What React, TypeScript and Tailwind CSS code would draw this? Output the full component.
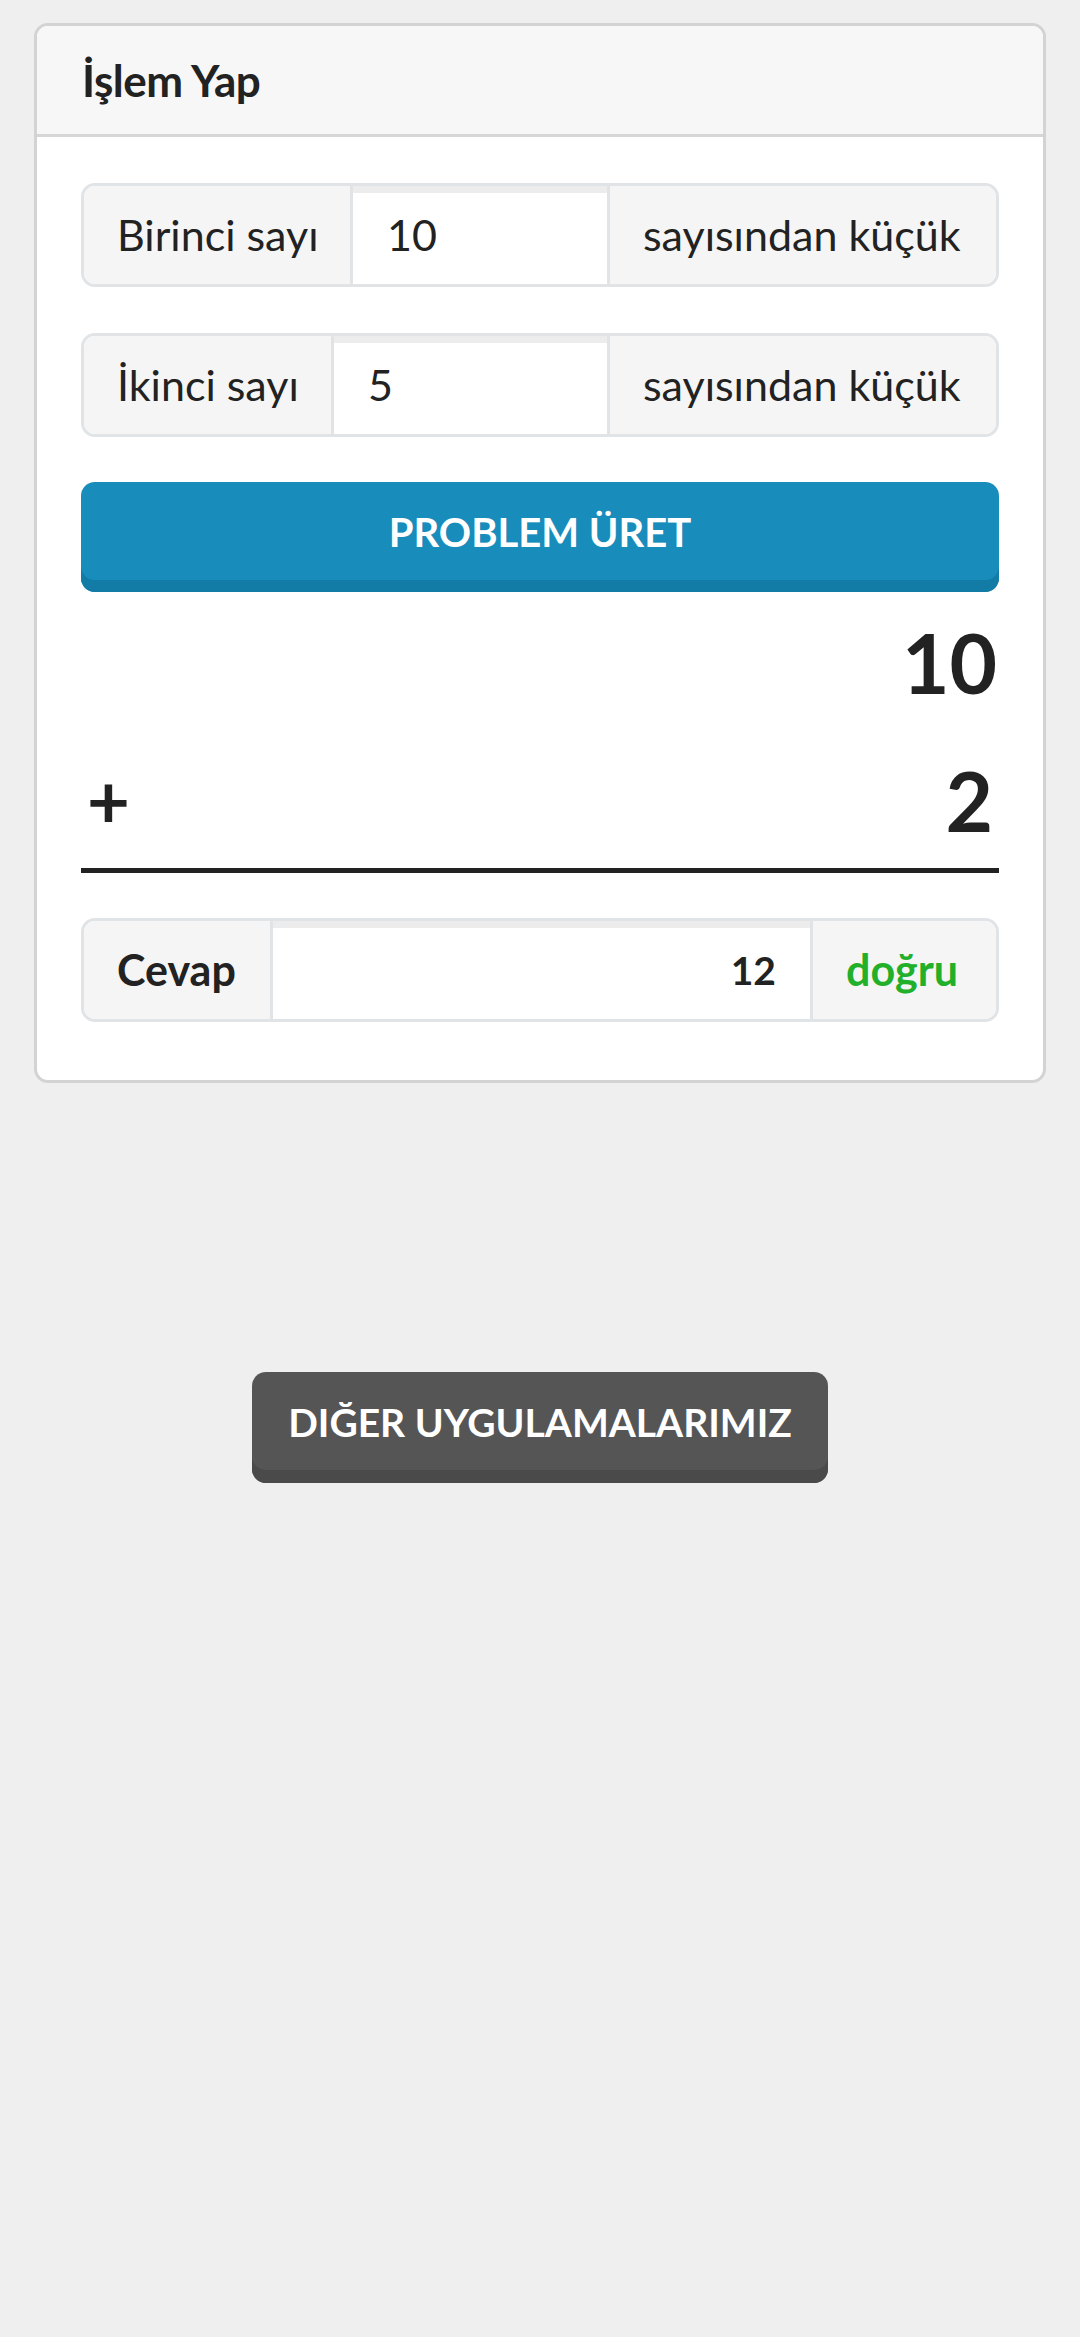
import { useState } from 'react'

const font = { fontFamily: 'Lato, "Noto Sans", sans-serif' }

function InputGroup({
  label,
  value,
  suffix,
  labelClass = '',
  inputClass = '',
  suffixClass = '',
  labelWidth,
}: {
  label: string
  value: string
  suffix: string
  labelClass?: string
  inputClass?: string
  suffixClass?: string
  labelWidth: string
}) {
  return (
    <div className="flex h-[104px] rounded-[14px] border-[3px] border-[#e1e4e7] overflow-hidden">
      <div className={`${labelWidth} flex items-center pl-[33px] bg-[#f5f5f5] border-r-[3px] border-[#e1e4e7] ${labelClass}`}>
        {label}
      </div>
      <div className={`flex-1 flex items-center bg-white shadow-[inset_0_7px_0_#ececec] ${inputClass}`}>
        {value}
      </div>
      <div className={`flex items-center pl-[33px] bg-[#f5f5f5] border-l-[3px] border-[#e1e4e7] ${suffixClass}`}>
        {suffix}
      </div>
    </div>
  )
}

export default function App() {
  const [first] = useState('10')
  const [second] = useState('5')

  return (
    <div className="min-h-[2337px] bg-[#efefef] pt-[23px] px-[34px] text-[#222]" style={font}>
      <div className="bg-white rounded-[14px] border-[3px] border-[#d3d3d3] overflow-hidden">
        {/* Header */}
        <div className="h-[111px] bg-[#f7f7f7] border-b-[3px] border-[#d6d6d6] flex items-center pl-[45px]">
          <h1 className="text-[44px] font-bold tracking-[-0.5px]">İşlem Yap</h1>
        </div>

        {/* Body */}
        <div className="px-[44px] pt-[46px] pb-[58px]">
          <InputGroup
            label="Birinci sayı"
            value={first}
            suffix="sayısından küçük"
            labelWidth="w-[269px]"
            labelClass="text-[43px]"
            inputClass="text-[43px] pl-[34px]"
            suffixClass="w-[389px] text-[43px]"
          />
          <div className="h-[46px]" />
          <InputGroup
            label="İkinci sayı"
            value={second}
            suffix="sayısından küçük"
            labelWidth="w-[250px]"
            labelClass="text-[43px]"
            inputClass="text-[43px] pl-[34px]"
            suffixClass="w-[389px] text-[43px]"
          />

          <button className="mt-[45px] w-full h-[110px] rounded-[14px] bg-[#188cbb] shadow-[inset_0_-12px_0_#127ca6] text-white text-[40px] font-bold pb-[10px]">
            PROBLEM ÜRET
          </button>

          {/* Problem */}
          <div className="h-[140px] flex items-center justify-end pr-[2px]">
            <span className="text-[82px] font-bold leading-none">10</span>
          </div>
          <div className="h-[136px] flex items-center justify-between pl-[6px] pr-[6px]">
            <span className="text-[74px] font-bold leading-none">+</span>
            <span className="text-[82px] font-bold leading-none">2</span>
          </div>
          <div className="h-[5px] bg-[#222]" />

          <div className="mt-[45px]">
            <InputGroup
              label="Cevap"
              value="12"
              suffix="doğru"
              labelWidth="w-[189px]"
              labelClass="text-[43px] font-bold"
              inputClass="text-[39px] font-bold justify-end pr-[34px]"
              suffixClass="w-[186px] text-[43px] font-bold text-[#22b02a]"
            />
          </div>
        </div>
      </div>

      <div className="mt-[289px] flex justify-center">
        <button className="w-[576px] h-[111px] rounded-[14px] bg-[#555555] shadow-[inset_0_-13px_0_#4a4a4a] text-white text-[39px] font-bold pb-[10px]">
          DIĞER UYGULAMALARIMIZ
        </button>
      </div>
    </div>
  )
}
